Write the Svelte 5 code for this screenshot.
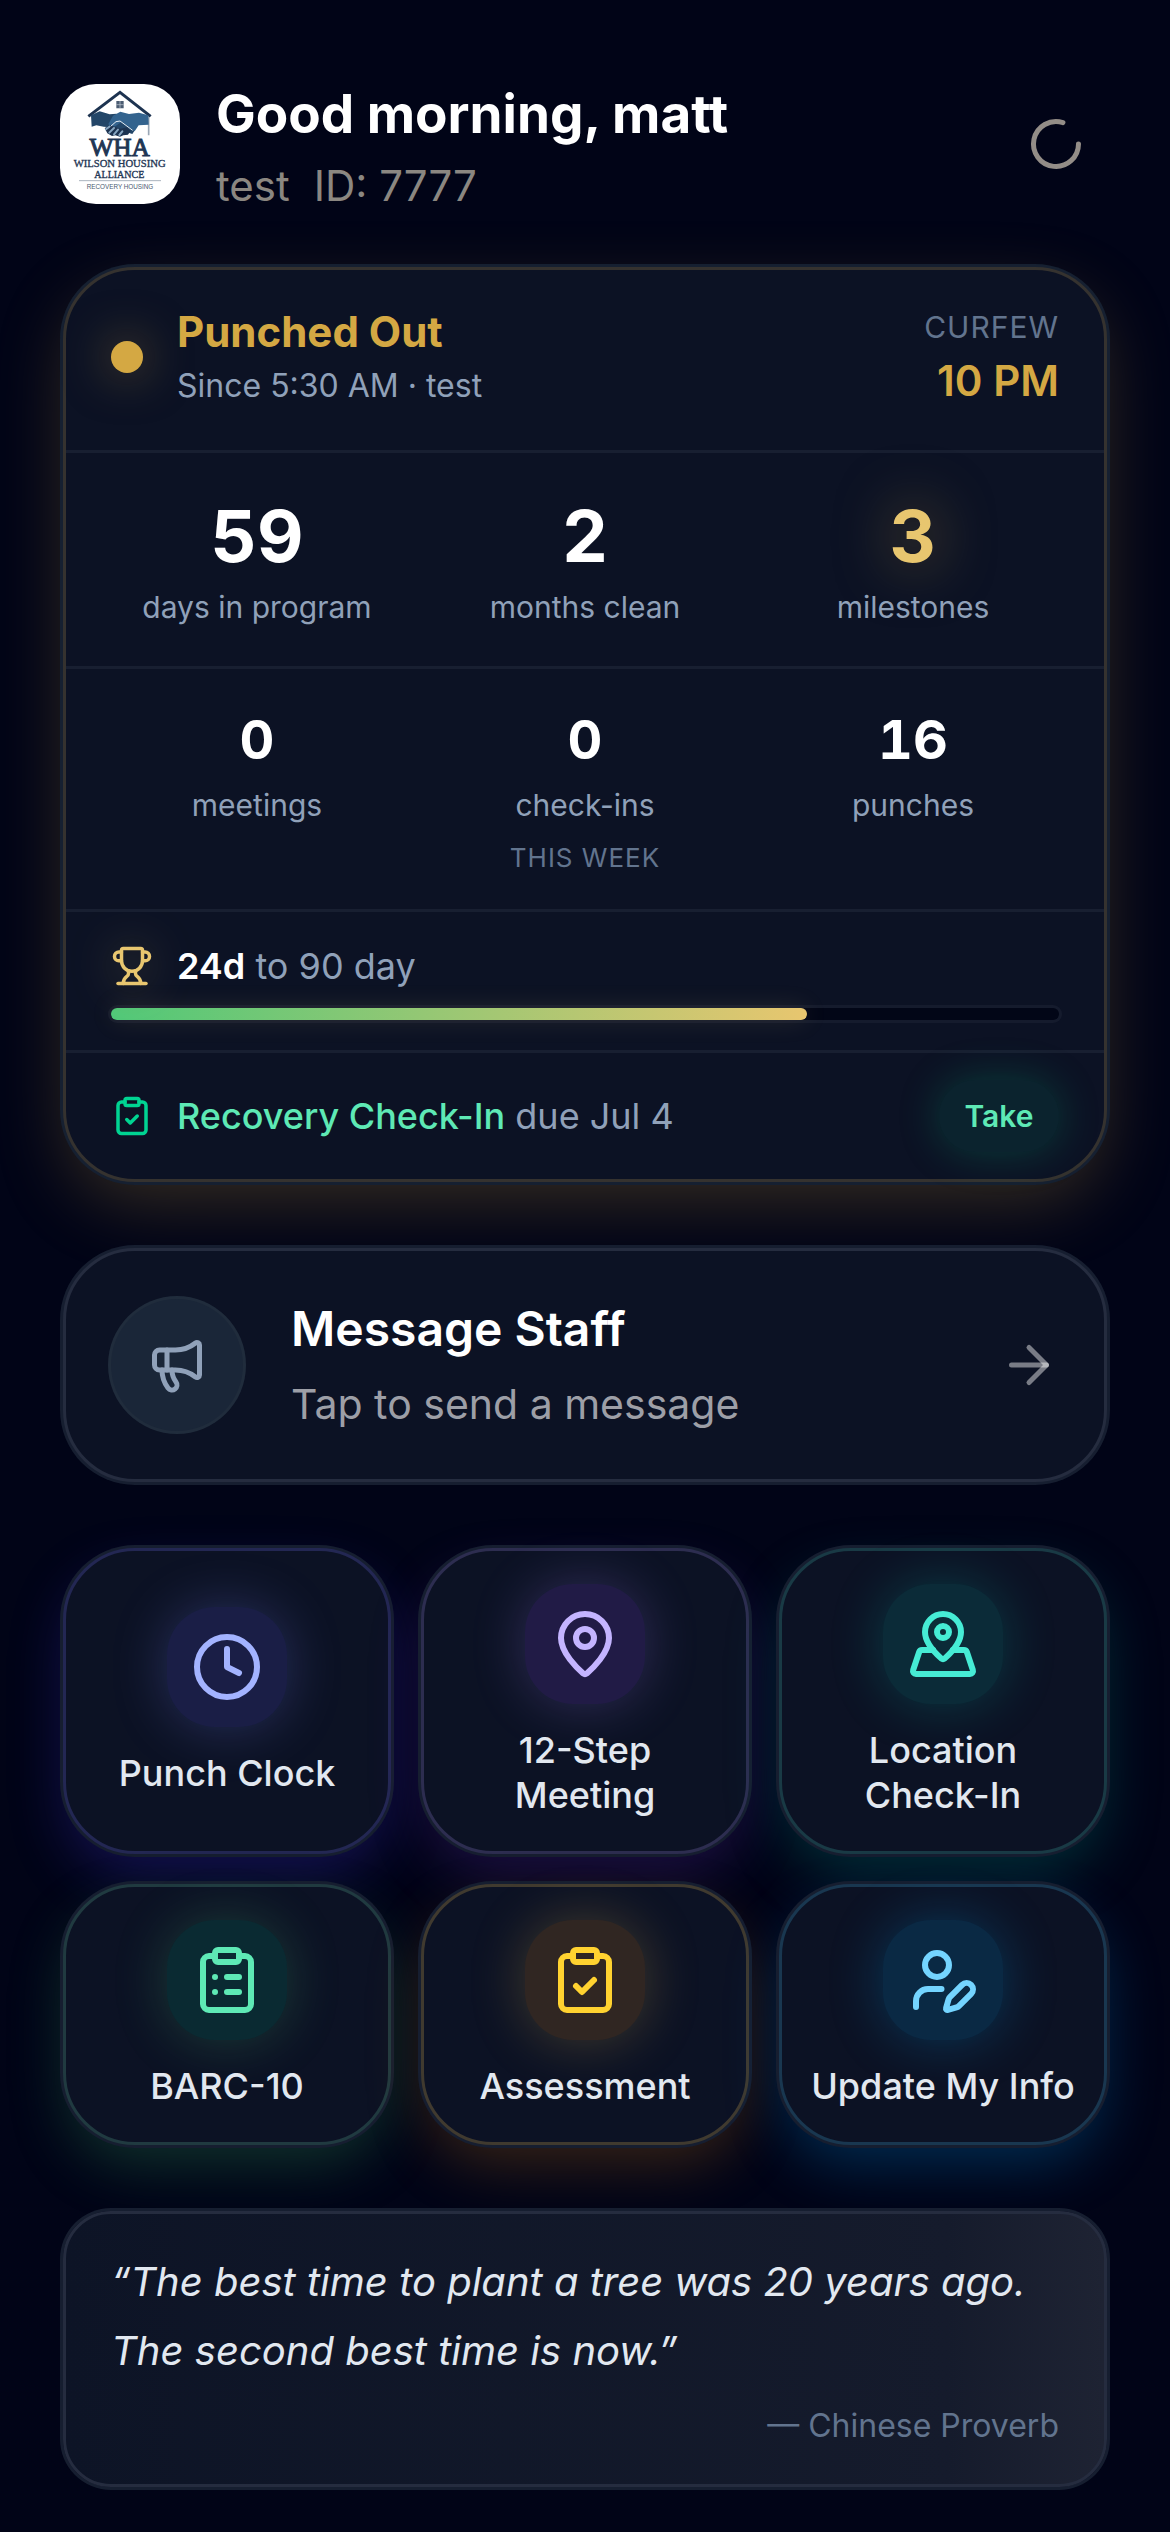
<script lang="ts">
	interface Stat {
		value: string;
		label: string;
		gold?: boolean;
	}

	interface Tile {
		label: string;
		tone: string;
		paths: string[];
	}

	const totals: Stat[] = [
		{ value: '59', label: 'days in program' },
		{ value: '2', label: 'months clean' },
		{ value: '3', label: 'milestones', gold: true }
	];

	const week: Stat[] = [
		{ value: '0', label: 'meetings' },
		{ value: '0', label: 'check-ins' },
		{ value: '16', label: 'punches' }
	];

	const progress = 73.4;

	const clipboard = [
		'M9 2h6a1 1 0 0 1 1 1v2a1 1 0 0 1-1 1H9a1 1 0 0 1-1-1V3a1 1 0 0 1 1-1z',
		'M16 4h2a2 2 0 0 1 2 2v14a2 2 0 0 1-2 2H6a2 2 0 0 1-2-2V6a2 2 0 0 1 2-2h2'
	];
	const clipboardCheck = [...clipboard, 'm9 14 2 2 4-4'];

	const tiles: Tile[] = [
		{
			label: 'Punch Clock',
			tone: 'indigo',
			paths: ['M12 2a10 10 0 1 0 0 20a10 10 0 1 0 0-20', 'M12 6v6l4 2']
		},
		{
			label: '12-Step Meeting',
			tone: 'violet',
			paths: [
				'M20 10c0 4.993-5.539 10.193-7.399 11.799a1 1 0 0 1-1.202 0C9.539 20.193 4 14.993 4 10a8 8 0 0 1 16 0',
				'M12 7a3 3 0 1 0 0 6a3 3 0 1 0 0-6'
			]
		},
		{
			label: 'Location Check-In',
			tone: 'teal',
			paths: [
				'M18 8c0 3.613-3.869 7.429-5.393 8.795a1 1 0 0 1-1.214 0C9.87 15.429 6 11.613 6 8a6 6 0 0 1 12 0',
				'M12 6a2 2 0 1 0 0 4a2 2 0 1 0 0-4',
				'M8.714 14h-3.71a1 1 0 0 0-.948.683l-2.004 6A1 1 0 0 0 3 22h18a1 1 0 0 0 .948-1.316l-2-6a1 1 0 0 0-.949-.684h-3.712'
			]
		},
		{
			label: 'BARC-10',
			tone: 'emerald',
			paths: [...clipboard, 'M12 11h4', 'M12 16h4', 'M8 11h.01', 'M8 16h.01']
		},
		{ label: 'Assessment', tone: 'amber', paths: clipboardCheck },
		{
			label: 'Update My Info',
			tone: 'sky',
			paths: [
				'M11.5 15H7a4 4 0 0 0-4 4v2',
				'M21.378 16.626a1 1 0 0 0-3.004-3.004l-4.01 4.012a2 2 0 0 0-.506.854l-.837 2.87a.5.5 0 0 0 .62.62l2.87-.837a2 2 0 0 0 .854-.506z',
				'M10 3a4 4 0 1 0 0 8a4 4 0 1 0 0-8'
			]
		}
	];

	const trophy = [
		'M6 9H4.5a2.5 2.5 0 0 1 0-5H6',
		'M18 9h1.5a2.5 2.5 0 0 0 0-5H18',
		'M4 22h16',
		'M10 14.66v1.626a2 2 0 0 1-.976 1.696A5 5 0 0 0 7 21.978',
		'M14 14.66v1.626a2 2 0 0 0 .976 1.696A5 5 0 0 1 17 21.978',
		'M6 9a6 6 0 0 0 12 0V3a1 1 0 0 0-1-1H7a1 1 0 0 0-1 1z'
	];

	const megaphone = [
		'M11 6a13 13 0 0 0 8.4-2.8A1 1 0 0 1 21 4v12a1 1 0 0 1-1.6.8A13 13 0 0 0 11 14H5a2 2 0 0 1-2-2V8a2 2 0 0 1 2-2z',
		'M6 14a12 12 0 0 0 2.4 7.2 2 2 0 0 0 3.2-2.4A8 8 0 0 1 10 14',
		'M8 6v8'
	];
</script>

{#snippet icon(paths: string[], cls: string)}
	<svg class="icon {cls}" viewBox="0 0 24 24" aria-hidden="true">
		{#each paths as d}
			<path {d} />
		{/each}
	</svg>
{/snippet}

{#snippet stat(item: Stat)}
	<div class="stat">
		<strong class:gold={item.gold}>{item.value}</strong>
		<span>{item.label}</span>
	</div>
{/snippet}

<main>
	<header>
		<svg class="logo" viewBox="12 12 360 360" role="img" aria-label="Wilson Housing Alliance">
			<rect x="12" y="12" width="360" height="360" fill="#fff" />
			<!-- roof, window and downpipe -->
			<path d="M97 109 192 37l92 72" fill="none" stroke="#1d3350" stroke-width="9" />
			<path d="M278 112v54" stroke="#9aa7b6" stroke-width="5" />
			<path d="M181 63h22v22h-22z" fill="#4b5c72" />
			<path d="M192 63v22M181 74h22" stroke="#c3cbd5" stroke-width="2" />
			<!-- handshake -->
			<path d="M105 106l26-12 30 9 20-2 18 12 22 22 14 18-6 9-12-4-30-12-22-4-22-2-22-4-14 4z" fill="#234668" />
			<path d="M277 106l-28-8-30 4-26-7-22 12-14 25 5 8 16-1 18-13 40 28 12-18 30-2z" fill="#33638e" />
			<path d="M146 144l18-8 14 6 16 4 18-4 12 10-8 12-14 2-10 4-14-4-10 2-14-8z" fill="#1d3350" />
			<path d="M150 148l10-8M160 158l14-14M174 163l12-14M190 165l9-11" stroke="#87a6c1" stroke-width="6" stroke-linecap="round" />
			<path d="M164 139l16-14 12-2 38 28" fill="none" stroke="#e6edf4" stroke-width="3" />
			<g font-family="'Liberation Serif', serif" text-anchor="middle" fill="#1f3654" stroke="#1f3654">
				<text x="191" y="228" font-size="76" stroke-width="3">WHA</text>
				<text x="191" y="261" font-size="32" stroke-width="1">WILSON HOUSING</text>
				<text x="190" y="293" font-size="30" stroke-width="1">ALLIANCE</text>
			</g>
			<path d="M69 302h246" stroke="#aab3be" stroke-width="3" />
			<text x="192" y="327" font-family="'Liberation Sans', sans-serif" font-size="19" text-anchor="middle" fill="#4b5c72">RECOVERY HOUSING</text>
		</svg>
		<div class="who">
			<h1>Good morning, matt</h1>
			<p><span>test</span><span>ID: 7777</span></p>
		</div>
		<button class="refresh" aria-label="Refresh">
			{@render icon(['M21 12a9 9 0 1 1-6.219-8.56'], 'mid')}
		</button>
	</header>

	<section class="card status">
		<div class="row punch">
			<span class="dot"></span>
			<div class="state">
				<h2>Punched Out</h2>
				<p>Since 5:30 AM · test</p>
			</div>
			<div class="curfew">
				<span>Curfew</span>
				<strong>10 PM</strong>
			</div>
		</div>
		<div class="row stats">
			{#each totals as item}
				{@render stat(item)}
			{/each}
		</div>
		<div class="row stats small">
			{#each week as item}
				{@render stat(item)}
			{/each}
			<p class="period">This week</p>
		</div>
		<div class="row goal">
			<div class="line">
				{@render icon(trophy, 'little trophy')}
				<p><b>24d</b> to 90 day</p>
			</div>
			<div class="track" role="progressbar" aria-label="Progress to 90 day" aria-valuenow={progress}>
				<div class="fill" style="width: {progress}%"></div>
			</div>
		</div>
		<div class="row line due">
			{@render icon(clipboardCheck, 'little check')}
			<p><b>Recovery Check-In</b> due Jul 4</p>
			<button class="take">Take</button>
		</div>
	</section>

	<button class="card message">
		<span class="circle">{@render icon(megaphone, 'mid')}</span>
		<span class="words">
			<strong>Message Staff</strong>
			<span>Tap to send a message</span>
		</span>
		{@render icon(['M5 12h14', 'm12 5 7 7-7 7'], 'mid arrow')}
	</button>

	<nav>
		{#each tiles as tile}
			<button class="card tile {tile.tone}">
				<span class="badge">{@render icon(tile.paths, 'big')}</span>
				<span class="label">{tile.label}</span>
			</button>
		{/each}
	</nav>

	<figure class="card quote">
		<blockquote>“The best time to plant a tree was 20 years ago. The second best time is now.”</blockquote>
		<figcaption>— Chinese Proverb</figcaption>
	</figure>
</main>

<style>
	:global(body) {
		background: #010417;
	}

	main {
		display: flex;
		flex-direction: column;
		gap: 66px;
		padding: 84px 63px 45px;
		font-family: Inter, 'Liberation Sans', sans-serif;
		color: #fff;
	}

	h1,
	h2,
	p,
	figure,
	blockquote {
		margin: 0;
	}

	button {
		font: inherit;
		color: inherit;
		cursor: pointer;
		border: none;
		background: none;
		padding: 0;
	}

	.icon {
		flex: none;
		fill: none;
		stroke: currentColor;
		stroke-width: 2;
		stroke-linecap: round;
		stroke-linejoin: round;
	}

	.little {
		width: 42px;
		height: 42px;
	}

	.mid {
		width: 60px;
		height: 60px;
	}

	.big {
		width: 72px;
		height: 72px;
	}

	header {
		display: flex;
		align-items: center;
		gap: 36px;
		height: 120px;
		margin: 0 -3px -3px;
	}

	.logo {
		flex: none;
		width: 120px;
		height: 120px;
		border-radius: 36px;
	}

	.who {
		flex: 1;
		padding-top: 6px;
	}

	h1 {
		font-size: 53px;
		line-height: 66px;
		font-weight: 700;
	}

	.who p {
		display: flex;
		gap: 24px;
		margin-top: 12px;
		font-size: 42px;
		line-height: 54px;
		color: #8b8781;
	}

	.refresh {
		display: grid;
		place-items: center;
		width: 108px;
		height: 108px;
		color: #938d87;
	}

	.card {
		box-sizing: border-box;
		border: 3px solid #252c3f;
		border-radius: 72px;
		background: #0c1224;
		box-shadow: 0 0 0 3px #161e30;
	}

	.status {
		border-color: #35322f;
		box-shadow:
			0 0 0 3px #162031,
			0 24px 72px -6px rgba(212, 168, 67, 0.26);
	}

	.row {
		padding: 30px 45px;
	}

	.row + .row {
		border-top: 3px solid #181f31;
	}

	.punch {
		display: flex;
		align-items: center;
		gap: 34px;
		padding: 27px 45px 33px;
		height: 120px;
	}

	.dot {
		width: 32px;
		height: 32px;
		border-radius: 50%;
		background: #d4a843;
		box-shadow: 0 0 48px rgba(212, 168, 67, 0.5);
	}

	.state {
		flex: 1;
	}

	h2 {
		font-size: 42px;
		line-height: 57px;
		font-weight: 700;
		color: #d4a843;
	}

	.state p {
		font-size: 32px;
		line-height: 51px;
		color: #90a1b9;
	}

	.curfew {
		display: flex;
		flex-direction: column;
		align-items: flex-end;
	}

	.curfew span {
		font-size: 30px;
		line-height: 48px;
		letter-spacing: 1px;
		text-transform: uppercase;
		color: #62748e;
	}

	.curfew strong {
		font-size: 42px;
		line-height: 60px;
		font-weight: 600;
		color: #d4a843;
	}

	.stats {
		display: grid;
		grid-template-columns: repeat(3, 1fr);
		gap: 0 36px;
		padding: 45px 45px 36px;
	}

	.stat {
		display: flex;
		flex-direction: column;
		align-items: center;
		gap: 12px;
	}

	.stat strong {
		font-size: 72px;
		line-height: 75px;
		font-weight: 700;
		font-variant-numeric: tabular-nums;
	}

	.stat .gold {
		color: #e8c66f;
		text-shadow: 0 0 60px rgba(212, 168, 67, 0.6);
	}

	.stat span {
		font-size: 30px;
		line-height: 45px;
		color: #90a1b9;
	}

	.small {
		padding: 42px 45px 30px;
	}

	.small .stat {
		gap: 15px;
	}

	.small strong {
		font-size: 54px;
		line-height: 57px;
	}

	.period {
		grid-column: 1 / -1;
		margin-top: 9px;
		font-size: 26px;
		line-height: 42px;
		letter-spacing: 1px;
		text-align: center;
		text-transform: uppercase;
		color: #62748e;
	}

	.line {
		display: flex;
		align-items: center;
		gap: 24px;
	}

	.line p {
		flex: 1;
		font-size: 36px;
		line-height: 48px;
		color: #90a1b9;
	}

	.line b {
		font-weight: 600;
		color: #fff;
	}

	.trophy {
		color: #e8c66f;
		filter: drop-shadow(0 0 24px rgba(232, 198, 111, 0.4));
	}

	.track {
		height: 12px;
		margin-top: 18px;
		border-radius: 6px;
		background: #020617;
		box-shadow: 0 0 0 3px #151b2d;
	}

	.fill {
		height: 100%;
		border-radius: 6px;
		background: linear-gradient(90deg, #50c878, #e8c66f);
		box-shadow: 0 0 24px rgba(232, 198, 111, 0.15);
	}

	.due {
		padding: 27px 45px;
	}

	.due b {
		font-weight: 500;
		color: #5ee9b5;
	}

	.check {
		color: #00d492;
	}

	.take {
		width: 120px;
		height: 72px;
		border-radius: 36px;
		background: #0b232e;
		box-shadow: 0 0 42px rgba(0, 188, 125, 0.25);
		font-size: 30px;
		font-weight: 600;
		color: #5ee9b5;
	}

	.message {
		display: flex;
		align-items: center;
		gap: 48px;
		padding: 45px;
		text-align: left;
	}

	.circle {
		display: grid;
		place-items: center;
		width: 132px;
		height: 132px;
		border-radius: 50%;
		background: #1a2638;
		box-shadow: 0 0 0 3px #202c3c;
		color: #90a1b9;
	}

	.words {
		display: flex;
		flex: 1;
		flex-direction: column;
		gap: 12px;
	}

	.words strong {
		font-size: 48px;
		line-height: 66px;
		font-weight: 600;
	}

	.words span {
		font-size: 41px;
		line-height: 60px;
		color: #9d9fa7;
	}

	.arrow {
		stroke: rgba(255, 255, 255, 0.45);
	}

	nav {
		display: grid;
		grid-template-columns: repeat(3, 1fr);
		gap: 30px;
	}

	.tile {
		display: flex;
		flex-direction: column;
		align-items: center;
		justify-content: center;
		gap: 24px;
		padding: 33px 24px;
		border-color: var(--edge);
		box-shadow:
			0 0 0 3px #161e30,
			0 24px 60px -6px var(--glow);
	}

	.badge {
		display: grid;
		place-items: center;
		width: 120px;
		height: 120px;
		border-radius: 48px;
		background: var(--fill);
		box-shadow: 0 0 54px var(--halo);
		color: var(--ink);
	}

	.label {
		font-size: 36px;
		line-height: 45px;
		font-weight: 500;
		color: #e2e8f0;
	}

	.indigo {
		--ink: #a3b3ff;
		--fill: #1a1e46;
		--edge: #232753;
		--glow: rgba(79, 57, 246, 0.28);
		--halo: rgba(124, 134, 255, 0.26);
	}

	.violet {
		--ink: #c4b4ff;
		--fill: #211b46;
		--edge: #2d2d50;
		--glow: rgba(130, 60, 220, 0.23);
		--halo: rgba(166, 132, 255, 0.24);
	}

	.teal {
		--ink: #46ecd5;
		--fill: #0b2b38;
		--edge: #193a45;
		--glow: rgba(0, 150, 137, 0.3);
		--halo: rgba(0, 213, 190, 0.22);
	}

	.emerald {
		--ink: #5ee9b5;
		--fill: #0a2a32;
		--edge: #203a40;
		--glow: rgba(50, 150, 90, 0.32);
		--halo: rgba(80, 200, 120, 0.24);
	}

	.amber {
		--ink: #ffd230;
		--fill: #302622;
		--edge: #403a2f;
		--glow: rgba(225, 133, 20, 0.25);
		--halo: rgba(212, 168, 67, 0.28);
	}

	.sky {
		--ink: #74d4ff;
		--fill: #0a2944;
		--edge: #193750;
		--glow: rgba(0, 132, 209, 0.32);
		--halo: rgba(0, 166, 244, 0.26);
	}

	.quote {
		padding: 33px 45px;
		border-radius: 48px;
		background: linear-gradient(90deg, #0d1426, #151b2c 85%, #1e2333);
	}

	blockquote {
		font-size: 40px;
		line-height: 69px;
		font-style: italic;
		color: #e2e8f0;
	}

	figcaption {
		margin-top: 15px;
		font-size: 32px;
		line-height: 51px;
		text-align: right;
		color: #62748e;
	}
</style>
